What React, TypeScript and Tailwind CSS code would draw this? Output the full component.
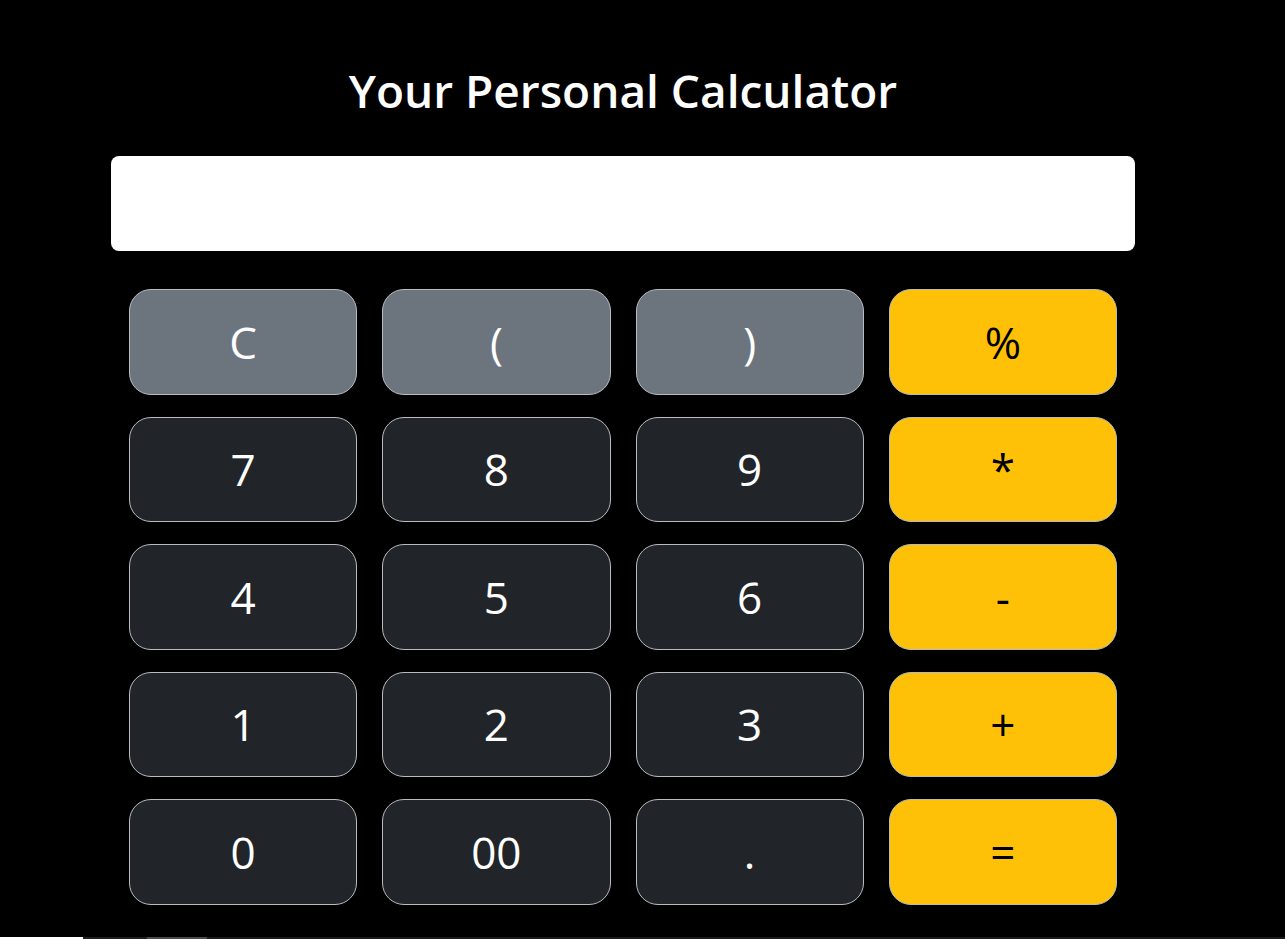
import React, { useState } from "react";

type Key = { label: string; kind: "gray" | "dark" | "yellow" };

const keys: Key[] = [
  { label: "C", kind: "gray" },
  { label: "(", kind: "gray" },
  { label: ")", kind: "gray" },
  { label: "%", kind: "yellow" },
  { label: "7", kind: "dark" },
  { label: "8", kind: "dark" },
  { label: "9", kind: "dark" },
  { label: "*", kind: "yellow" },
  { label: "4", kind: "dark" },
  { label: "5", kind: "dark" },
  { label: "6", kind: "dark" },
  { label: "-", kind: "yellow" },
  { label: "1", kind: "dark" },
  { label: "2", kind: "dark" },
  { label: "3", kind: "dark" },
  { label: "+", kind: "yellow" },
  { label: "0", kind: "dark" },
  { label: "00", kind: "dark" },
  { label: ".", kind: "dark" },
  { label: "=", kind: "yellow" },
];

const kindClass = {
  gray: "bg-[#6c757d] text-white",
  dark: "bg-[#212529] text-white",
  yellow: "bg-[#ffc107] text-black",
};

export default function App() {
  const [value, setValue] = useState("");

  const press = (k: string) => {
    if (k === "C") return setValue("");
    if (k === "=") {
      try {
        // eslint-disable-next-line no-new-func
        setValue(String(Function(`return (${value})`)()));
      } catch {
        setValue("Error");
      }
      return;
    }
    setValue((v) => v + k);
  };

  return (
    <div className="min-h-screen bg-black font-['Open_Sans','Noto_Sans',sans-serif]">
      <div className="ml-[111px] w-[1024px] pt-[58px]">
        <h1 className="text-center text-[46px] font-semibold leading-[64px] text-white">
          Your Personal Calculator
        </h1>

        {/* display */}
        <input
          type="text"
          value={value}
          readOnly
          className="mt-[34px] block h-[95px] w-full rounded-lg bg-white px-4 text-right text-4xl text-black outline-none"
        />

        <div className="mx-[18px] mt-[38px] grid grid-cols-4 gap-x-[25px] gap-y-[22px]">
          {keys.map((k) => (
            <button
              key={k.label}
              onClick={() => press(k.label)}
              className={`flex h-[105.5px] items-center justify-center rounded-[22px] border border-[#b8bcc0] text-[44px] leading-none ${kindClass[k.kind]}`}
            >
              {k.label}
            </button>
          ))}
        </div>
      </div>

      {/* strip at the very bottom edge */}
      <div className="mt-[32.5px] flex h-[4px]">
        <div className="w-[83px] bg-white"></div>
        <div className="w-[64px] bg-[#1f1f1f]"></div>
        <div className="w-[60px] bg-[#4a4a4a]"></div>
        <div className="flex-1 bg-[#1a1a1a]"></div>
      </div>
    </div>
  );
}
